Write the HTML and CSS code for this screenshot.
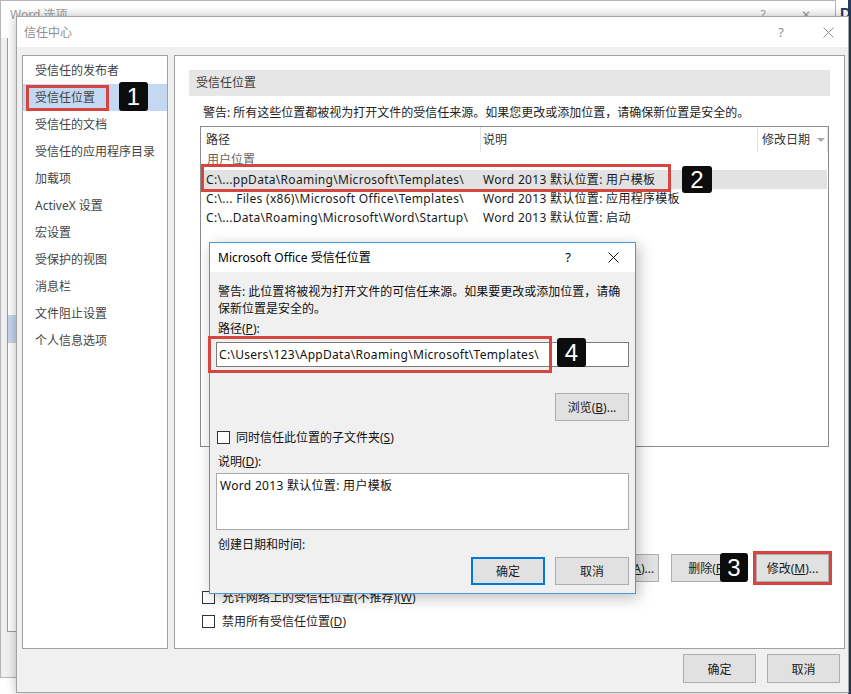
FILE: index.html
```html
<!DOCTYPE html>
<html lang="zh-CN">
<head>
<meta charset="utf-8">
<title>信任中心</title>
<link rel="stylesheet" href="styles.css">
</head>
<body>
<div class="desktop">
  <div class="doc-win"><span class="doc-letter">D</span></div>

  <div class="word-win">
    <div class="word-title">
      <span class="word-title-text">Word 选项</span>
      <span class="word-q">?</span>
      <span class="word-x">✕</span>
    </div>
    <div class="word-body">
      <div class="word-nav"><div class="word-nav-sel"></div></div>
    </div>
  </div>

  <div class="tc-win">
    <div class="tc-title">
      <span class="tc-title-text">信任中心</span>
      <span class="tbtn tbtn-q">?</span>
      <span class="tbtn tbtn-x"><svg width="11" height="11" viewBox="0 0 11 11"><path d="M0.5 0.5L10.5 10.5M10.5 0.5L0.5 10.5" stroke="#8a8a8a" stroke-width="1" fill="none"/></svg></span>
    </div>
    <div class="tc-body">
      <div class="tc-main">
        <nav class="tc-nav">
          <div class="nav-item">受信任的发布者</div>
          <div class="nav-item selected">受信任位置</div>
          <div class="nav-item">受信任的文档</div>
          <div class="nav-item">受信任的应用程序目录</div>
          <div class="nav-item">加载项</div>
          <div class="nav-item">ActiveX 设置</div>
          <div class="nav-item">宏设置</div>
          <div class="nav-item">受保护的视图</div>
          <div class="nav-item">消息栏</div>
          <div class="nav-item">文件阻止设置</div>
          <div class="nav-item">个人信息选项</div>
        </nav>
        <section class="tc-panel">
          <div class="section-head">受信任位置</div>
          <p class="panel-warn">警告: 所有这些位置都被视为打开文件的受信任来源。如果您更改或添加位置，请确保新位置是安全的。</p>
          <div class="loc-table">
            <div class="loc-head">
              <div class="lh lh-path">路径</div>
              <div class="lh lh-desc">说明</div>
              <div class="lh lh-date">修改日期<span class="sort-arrow"></span></div>
            </div>
            <div class="loc-group">用户位置</div>
            <div class="loc-row selected"><span class="c-path">C:\...ppData\Roaming\Microsoft\Templates\</span><span class="c-desc">Word 2013 默认位置: 用户模板</span></div>
            <div class="loc-row"><span class="c-path">C:\... Files (x86)\Microsoft Office\Templates\</span><span class="c-desc">Word 2013 默认位置: 应用程序模板</span></div>
            <div class="loc-row"><span class="c-path">C:\...Data\Roaming\Microsoft\Word\Startup\</span><span class="c-desc">Word 2013 默认位置: 启动</span></div>
          </div>
          <div class="panel-btns">
            <button class="btn btn-wide">添加新位置(<u>A</u>)...</button>
            <button class="btn">删除(<u>R</u>)</button>
            <button class="btn">修改(<u>M</u>)...</button>
          </div>
          <label class="chk-row"><span class="chk"></span>允许网络上的受信任位置(不推荐)(<u>W</u>)</label>
          <label class="chk-row"><span class="chk"></span>禁用所有受信任位置(<u>D</u>)</label>
        </section>
      </div>
      <div class="tc-footer">
        <button class="btn btn-foot">确定</button>
        <button class="btn btn-foot">取消</button>
      </div>
    </div>
  </div>

  <div class="modal">
    <div class="m-title">
      <span class="m-title-text">Microsoft Office 受信任位置</span>
      <span class="tbtn m-q">?</span>
      <span class="tbtn m-x"><svg width="11" height="11" viewBox="0 0 11 11"><path d="M0.5 0.5L10.5 10.5M10.5 0.5L0.5 10.5" stroke="#111" stroke-width="1" fill="none"/></svg></span>
    </div>
    <div class="m-body">
      <p class="m-text m-warn">警告: 此位置将被视为打开文件的可信任来源。如果要更改或添加位置，请确保新位置是安全的。</p>
      <p class="m-text m-label-path">路径(<u>P</u>):</p>
      <div class="m-input">C:\Users\123\AppData\Roaming\Microsoft\Templates\</div>
      <div class="m-browse-row"><button class="btn m-btn">浏览(<u>B</u>)...</button></div>
      <label class="m-chk-row"><span class="chk"></span>同时信任此位置的子文件夹(<u>S</u>)</label>
      <p class="m-text m-label-desc">说明(<u>D</u>):</p>
      <div class="m-textarea">Word 2013 默认位置: 用户模板</div>
      <p class="m-text m-label-date">创建日期和时间:</p>
      <div class="m-btns">
        <button class="btn m-btn btn-default">确定</button>
        <button class="btn m-btn">取消</button>
      </div>
    </div>
  </div>

  <div class="mark mark-1"></div>
  <div class="mark mark-2"></div>
  <div class="mark mark-3"></div>
  <div class="mark mark-4"></div>
  <div class="badge badge-1">1</div>
  <div class="badge badge-2">2</div>
  <div class="badge badge-3">3</div>
  <div class="badge badge-4">4</div>
</div>
</body>
</html>
```

FILE: styles.css
```css
* { box-sizing: border-box; margin: 0; padding: 0; }
html, body { width: 851px; height: 694px; overflow: hidden; }
body {
  font-family: "Noto Sans", "Noto Sans CJK SC", sans-serif;
  font-size: 12px;
  line-height: 17px;
  color: #1e1e1e;
  background: #fff;
}
u { text-decoration: underline; text-underline-offset: 1px; }

.desktop { position: relative; width: 851px; height: 694px; overflow: hidden; background: #fff; }

/* background document window */
.doc-win {
  position: absolute; left: 836px; top: 0; width: 15px; height: 694px;
  background: #fff; border-right: 3px solid #2a3b5c;
}
.doc-letter {
  display: block; margin: 4px 0 0 4px;
  font-family: "Liberation Sans", sans-serif; font-weight: bold; font-size: 15px; color: #1f3864;
}

/* background Word options window */
.word-win {
  position: absolute; left: 0; top: 0; width: 836px; height: 678px;
  background: #f0f0f0; border: 1px solid #b5b5b5;
  display: flex; flex-direction: column;
}
.word-title { height: 37px; display: flex; align-items: flex-start; padding-top: 5px; color: #a0a0a0; background: #fff; }
.word-title-text { padding-left: 9px; flex: 1; font-size: 12px; }
.word-q { width: 40px; text-align: center; }
.word-x { width: 46px; text-align: center; margin-right: 6px; }
.word-body { flex: 1; padding-left: 6px; }
.word-nav { width: 200px; height: 594px; background: #fff; border-left: 1px solid #9d9d9d; border-bottom: 1px solid #9d9d9d; padding-top: 277px; }
.word-nav-sel { height: 28px; background: #c5d5ec; }

/* trust center window */
.tc-win {
  position: absolute; left: 16px; top: 16px; width: 833px; height: 677px;
  border: 1px solid #a3a3a3; background: #f0f0f0;
  box-shadow: 0 0 10px rgba(0, 0, 0, 0.28);
  display: flex; flex-direction: column;
}
.tc-title { height: 30px; background: #fff; display: flex; align-items: center; color: #8f8f8f; }
.tc-title-text { flex: 1; padding-left: 7px; }
.tbtn { display: flex; align-items: center; justify-content: center; }
.tbtn-q { width: 54px; font-size: 13px; }
.tbtn-x { width: 40px; }

.tc-body { flex: 1; padding: 8px 3px 0 5px; display: flex; flex-direction: column; }
.tc-main { display: flex; gap: 6px; height: 594px; }
.tc-nav { width: 146px; background: #fff; border: 1px solid #a0a0a0; padding-top: 1px; }
.nav-item { height: 27px; line-height: 27px; padding-left: 12px; color: #444; white-space: nowrap; }
.nav-item.selected { background: #c5d8f1; }

.tc-panel { width: 671px; background: #fff; border: 1px solid #a0a0a0; padding: 14px 14px 0 14px; display: flex; flex-direction: column; }
.section-head { height: 26px; line-height: 26px; background: #e6e6e6; padding-left: 7px; color: #3c3c3c; }
.panel-warn { margin: 8px 0 0 14px; color: #222; white-space: nowrap; }

.loc-table { margin: 5px 0 0 11px; width: 629px; height: 321px; border: 1px solid #8c8c8c; background: #fff; }
.loc-head { display: flex; height: 25px; }
.lh { line-height: 25px; border-right: 1px solid #e3e3e3; color: #333; }
.lh-path { width: 280px; padding-left: 5px; }
.lh-desc { width: 277px; padding-left: 2px; }
.lh-date { width: 70px; padding-left: 4px; display: flex; align-items: center; }
.sort-arrow { margin-left: 7px; width: 0; height: 0; border-left: 4px solid transparent; border-right: 4px solid transparent; border-top: 4px solid #a9a9a9; }
.loc-group { height: 18px; line-height: 16px; padding-left: 6px; color: #666; }
.loc-row { display: flex; height: 19px; line-height: 19px; white-space: nowrap; color: #1a1a1a; letter-spacing: 0.3px; }
.loc-row.selected { background: #e2e2e2; width: 626px; }
.c-path { width: 282px; padding-left: 5px; overflow: hidden; }
.c-desc { flex: 1; }

.panel-btns { display: flex; justify-content: flex-end; gap: 12px; margin: 107px 1px 0 0; }
.btn {
  font-family: inherit; font-size: 12px; color: #1a1a1a;
  height: 28px; width: 73px; background: #e1e1e1; border: 1px solid #adadad;
  white-space: nowrap; overflow: hidden; display: flex; align-items: center; justify-content: center;
}
.btn-wide { width: 104px; padding-left: 10px; }
.chk-row { display: flex; align-items: center; height: 17px; margin: 7px 0 0 13px; color: #222; }
.chk { width: 13px; height: 13px; border: 1px solid #333; background: #fff; margin-right: 7px; flex: none; }

.tc-footer { display: flex; justify-content: flex-end; gap: 11px; padding: 5px 5px 0 0; }
.btn-foot { height: 29px; }

/* modal dialog */
.modal {
  position: absolute; left: 209px; top: 242px; width: 427px; height: 352px;
  background: #f0f0f0; border: 1px solid #4a98da;
  box-shadow: 3px 4px 14px rgba(0, 0, 0, 0.25);
  display: flex; flex-direction: column;
}
.m-title { height: 29px; background: #fff; display: flex; align-items: center; color: #000; }
.m-title-text { flex: 1; padding-left: 8px; }
.m-q { width: 46px; font-size: 13px; }
.m-x { width: 44px; }
.m-body { padding: 11px 6px 0 6px; display: flex; flex-direction: column; }
.m-text { padding-left: 2px; color: #111; }
.m-warn { width: 412px; }
.m-label-path { margin-top: 3px; }
.m-input { margin-top: 5px; height: 25px; border: 1px solid #7a7a7a; background: #fff; line-height: 23px; padding-left: 2px; color: #111; white-space: nowrap; letter-spacing: 0.3px; }
.m-browse-row { display: flex; justify-content: flex-end; margin-top: 26px; }
.m-btn { width: 74px; height: 28px; }
.m-chk-row { display: flex; align-items: center; height: 17px; margin: 8px 0 0 1px; color: #111; }
.m-chk-row .chk { margin-right: 6px; }
.m-label-desc { margin-top: 7px; }
.m-textarea { margin-top: 3px; height: 57px; border: 1px solid #a9a9a9; background: #fff; padding: 3px 3px; color: #111; letter-spacing: 0.3px; }
.m-label-date { margin-top: 6px; }
.m-btns { display: flex; justify-content: flex-end; gap: 10px; margin-top: 4px; }
.btn-default { border: 1px solid #0078d7; box-shadow: inset 0 0 0 1px #0078d7; }

/* annotation marks */
.mark { position: absolute; border: 3px solid #d6453f; }
.mark-1 { left: 26px; top: 85px; width: 83px; height: 26px; }
.mark-2 { left: 201px; top: 164px; width: 470px; height: 28px; }
.mark-3 { left: 753px; top: 551px; width: 79px; height: 34px; }
.mark-4 { left: 208px; top: 336px; width: 344px; height: 37px; }
.badge {
  position: absolute; background: #0c0c0c; color: #fff; border-radius: 3px;
  font-family: "Liberation Sans", sans-serif; font-size: 24px; line-height: 29px; text-align: center;
  width: 29px; height: 29px;
}
.badge-1 { left: 119px; top: 82px; }
.badge-2 { left: 682px; top: 166px; width: 30px; height: 27px; line-height: 27px; }
.badge-3 { left: 720px; top: 553px; width: 28px; }
.badge-4 { left: 557px; top: 338px; }
```
